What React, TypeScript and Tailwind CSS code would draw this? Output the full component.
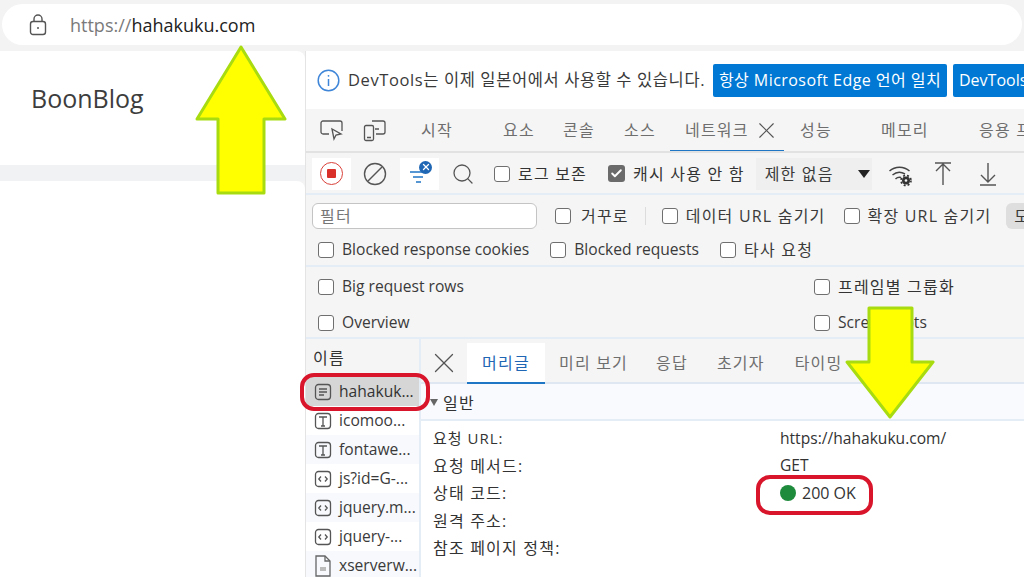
import React from "react";
import { X, Search, Check } from "lucide-react";

const K = "text-[16px] tracking-[1.2px]";

function Box({ checked = false }: { checked?: boolean }) {
  return checked ? (
    <span className="flex h-[17px] w-[17px] shrink-0 items-center justify-center rounded-[3px] bg-[#6b6b6b]">
      <Check size={13} strokeWidth={3.5} className="text-white" />
    </span>
  ) : (
    <span className="h-[16px] w-[16px] shrink-0 rounded-[3px] border border-[#6f6f6f] bg-white" />
  );
}

function CheckItem({ label, checked, className = "" }: { label: string; checked?: boolean; className?: string }) {
  return (
    <div className={`flex shrink-0 items-center gap-[8px] whitespace-nowrap ${className}`}>
      <Box checked={checked} />
      <span>{label}</span>
    </div>
  );
}

function FileIcon({ kind }: { kind: "doc" | "font" | "js" | "file" }) {
  if (kind === "file")
    return (
      <svg width="18" height="22" viewBox="0 0 18 22" fill="none" stroke="#666" strokeWidth="1.3" className="shrink-0">
        <path d="M2 1h9l5 5v15H2z" />
        <path d="M11 1v5h5" />
        <rect x="6" y="12" width="6" height="4" fill="#bbb" stroke="none" />
      </svg>
    );
  return (
    <svg width="18" height="18" viewBox="0 0 18 18" fill="none" stroke="#555" strokeWidth="1.3" className="shrink-0">
      <rect x="1.5" y="1.5" width="15" height="15" rx="3" />
      {kind === "doc" && <path d="M5 6h8M5 9h8M5 12h5" />}
      {kind === "font" && <path d="M5 5h8M9 5v9M7 14h4" />}
      {kind === "js" && <path d="M7 6.5 4.8 9 7 11.5M11 6.5 13.2 9 11 11.5" />}
    </svg>
  );
}

const files: [("doc" | "font" | "js" | "file"), string][] = [
  ["font", "icomoo..."],
  ["font", "fontawe..."],
  ["js", "js?id=G-..."],
  ["js", "jquery.m..."],
  ["js", "jquery-..."],
  ["file", "xserverw..."],
];

export default function App() {
  return (
    <div className="relative h-[577px] w-[1024px] overflow-hidden bg-[#f3f3f3] font-['Open_Sans','Noto_Sans_CJK_KR',sans-serif] text-[15.6px] leading-none text-[#3a3a3a]">
      {/* address bar */}
      <div className="flex h-[51px] items-start px-[2px] pt-[4px]">
        <div className="flex h-[41px] w-full items-center rounded-full bg-white pl-[27px] text-[18px]">
          <svg width="18" height="22" viewBox="0 0 18 22" fill="none" stroke="#555" strokeWidth="1.4">
            <rect x="1.5" y="7.5" width="15" height="13" rx="2.5" />
            <path d="M5 7.5V5a4 4 0 0 1 8 0v2.5" />
            <circle cx="9" cy="14" r="1" fill="#555" stroke="none" />
          </svg>
          <span className="ml-[23px] text-[#7a7a7a]">https://</span>
          <span className="text-[#222]">hahakuku.com</span>
        </div>
      </div>

      <div className="flex h-[526px]">
        {/* page */}
        <div className="flex w-[305px] shrink-0 flex-col">
          <div className="h-[114px] rounded-tr-lg bg-white pl-[31px] pt-[35px] text-[25px] text-[#3d3d3d]">BoonBlog</div>
          <div className="h-[16px] bg-[#f1f2f4]" />
          <div className="flex-1 rounded-tr-lg bg-white" />
        </div>

        {/* devtools */}
        <div className="flex min-w-0 flex-1 flex-col border-l border-[#e4e4e4] bg-white">
          {/* info bar */}
          <div className="flex h-[58px] shrink-0 items-center overflow-hidden whitespace-nowrap pl-[11px]">
            <svg width="23" height="23" viewBox="0 0 23 23" fill="none" stroke="#3f86d8" strokeWidth="1.5" className="shrink-0">
              <circle cx="11.5" cy="11.5" r="10.3" />
              <path d="M11.5 10v7" />
              <circle cx="11.5" cy="6.8" r="0.9" fill="#3f86d8" stroke="none" />
            </svg>
            <span className="ml-[8px] w-[365px] shrink-0 text-[16.5px] tracking-[0.6px]">DevTools는 이제 일본어에서 사용할 수 있습니다.</span>
            <span className="flex h-[33px] w-[234px] shrink-0 items-center justify-center rounded-[2px] bg-[#0078d4] text-[16px] tracking-[0.45px] text-white">항상 Microsoft Edge 언어 일치</span>
            <span className="ml-[6px] flex h-[33px] w-[80px] shrink-0 items-center rounded-l-[2px] bg-[#0078d4] pl-[6px] text-[16px] text-white">DevTools</span>
          </div>

          {/* tabs */}
          <div className={`flex h-[44px] shrink-0 items-center overflow-hidden whitespace-nowrap border-b-2 border-[#e2e2e2] bg-[#f5f5f5] pl-[14px] text-[#6e6e6e] ${K}`}>
            <svg width="24" height="22" viewBox="0 0 24 22" fill="none" stroke="#555" strokeWidth="1.3" className="shrink-0">
              <path d="M9 15H3a2 2 0 0 1-2-2V4a2 2 0 0 1 2-2h17a2 2 0 0 1 2 2v8" />
              <path d="M12 10l2 10 2-4 5-1z" />
            </svg>
            <svg width="24" height="24" viewBox="0 0 24 24" fill="none" stroke="#555" strokeWidth="1.3" className="ml-[19px] shrink-0">
              <path d="M9 3h11a2 2 0 0 1 2 2v9a2 2 0 0 1-2 2h-7" />
              <rect x="1.5" y="7.5" width="9" height="15" rx="1.5" />
              <path d="M4 19.5h4M12 11h4" />
            </svg>
            <span className="ml-[34px] w-[82px] shrink-0">시작</span>
            <span className="w-[60px] shrink-0">요소</span>
            <span className="w-[61px] shrink-0">콘솔</span>
            <span className="w-[61px] shrink-0">소스</span>
            <div className="relative flex h-full w-[115px] shrink-0 items-center">
              <span>네트워크</span>
              <X size={27} strokeWidth={1} className="ml-[4px] text-[#555]" />
              <span className="absolute -bottom-[1px] left-[-15px] right-[16px] h-[2px] bg-[#1f76c5]" />
            </div>
            <span className="w-[81px] shrink-0">성능</span>
            <span className="w-[98px] shrink-0">메모리</span>
            <span>응용 프</span>
          </div>

          {/* toolbar */}
          <div className={`flex h-[42px] shrink-0 items-center whitespace-nowrap border-b-2 border-[#e4ecf6] bg-[#f5f5f5] pl-[6px] pt-[1px] ${K}`}>
            <span className="flex h-[32px] w-[39px] shrink-0 items-center justify-center bg-white">
              <span className="flex h-[23px] w-[23px] items-center justify-center rounded-full border-[1.5px] border-[#d9413a]">
                <span className="h-[9px] w-[9px] rounded-[1px] bg-[#d9302a]" />
              </span>
            </span>
            <svg width="24" height="24" viewBox="0 0 24 24" fill="none" stroke="#555" strokeWidth="1.4" className="ml-[12px] shrink-0">
              <circle cx="12" cy="12" r="10.5" />
              <path d="M5 19 19 5" />
            </svg>
            <span className="relative ml-[13px] flex h-[32px] w-[39px] shrink-0 items-center justify-center bg-white">
              <svg width="24" height="24" viewBox="0 0 24 24" fill="none" stroke="#1f76c5" strokeWidth="1.4">
                <path d="M2 10h15M5 15h10M8 20h5" />
              </svg>
              <span className="absolute right-[7px] top-[3px] flex h-[13px] w-[13px] items-center justify-center rounded-full bg-[#1f66b5]">
                <X size={10} strokeWidth={3} className="text-white" />
              </span>
            </span>
            <Search size={24} strokeWidth={1.3} className="ml-[12px] shrink-0 text-[#555]" />
            <CheckItem label="로그 보존" className="ml-[19px] text-[#333]" />
            <CheckItem label="캐시 사용 안 함" checked className="ml-[21px] text-[#333]" />
            <div className="ml-[11px] flex h-[32px] w-[116px] shrink-0 items-center justify-between bg-[#efefef] pl-[9px] pr-[2px]">
              <span>제한 없음</span>
              <span className="h-0 w-0 border-x-[6px] border-t-[8px] border-x-transparent border-t-[#222]" />
            </div>
            <svg width="26" height="26" viewBox="0 0 26 26" fill="none" stroke="#444" strokeWidth="1.5" className="ml-[16px] shrink-0">
              <path d="M1.5 10a15 15 0 0 1 20 0M4.5 14a11 11 0 0 1 12.5-1M7.5 18a6 6 0 0 1 5.5-1.5" />
              <circle cx="18" cy="19.5" r="4" fill="#333" stroke="none" />
              <circle cx="18" cy="19.5" r="5" fill="none" stroke="#333" strokeWidth="1.6" strokeDasharray="2 2" />
              <circle cx="18" cy="19.5" r="1.3" fill="#f5f5f5" stroke="none" />
            </svg>
            <svg width="20" height="26" viewBox="0 0 20 26" fill="none" stroke="#555" strokeWidth="1.4" className="ml-[19px] shrink-0">
              <path d="M2 2h16M10 3v21M3 10l7-7 7 7" />
            </svg>
            <svg width="20" height="26" viewBox="0 0 20 26" fill="none" stroke="#555" strokeWidth="1.4" className="ml-[25px] shrink-0">
              <path d="M2 24h16M10 2v19M3 14l7 7 7-7" />
            </svg>
          </div>

          {/* filter row */}
          <div className={`flex h-[38px] shrink-0 items-center overflow-hidden whitespace-nowrap bg-[#f5f5f5] pl-[6px] pt-[3px] ${K}`}>
            <div className="flex h-[26px] w-[225px] shrink-0 items-center rounded-md border border-[#c4c4c4] bg-white pl-[7px] text-[#777]">필터</div>
            <CheckItem label="거꾸로" className="ml-[18px] gap-[10px]" />
            <span className="ml-[16px] h-[18px] w-px shrink-0 bg-[#dcdcdc]" />
            <CheckItem label="데이터 URL 숨기기" className="ml-[16px]" />
            <CheckItem label="확장 URL 숨기기" className="ml-[18px]" />
            <span className="ml-[15px] flex h-[26px] w-[60px] shrink-0 items-center rounded-md bg-[#dedede] pl-[8px]">모</span>
          </div>

          {/* filter row 2 */}
          <div className="flex h-[34px] shrink-0 items-center gap-[21px] whitespace-nowrap border-b-2 border-[#e4ecf6] bg-[#f5f5f5] pl-[12px] pt-[2px]">
            <CheckItem label="Blocked response cookies" />
            <CheckItem label="Blocked requests" />
            <CheckItem label="타사 요청" className={K} />
          </div>

          {/* settings */}
          <div className="grid h-[72px] shrink-0 grid-cols-[496px_1fr] content-center gap-y-[20px] whitespace-nowrap border-b-2 border-[#e4ecf6] bg-[#f5f5f5] pl-[12px] pt-[5px]">
            <CheckItem label="Big request rows" />
            <CheckItem label="프레임별 그룹화" className={`text-[#333] ${K}`} />
            <CheckItem label="Overview" />
            <CheckItem label="Screenshots" />
          </div>

          {/* split */}
          <div className="flex min-h-0 flex-1">
            <div className="w-[115px] shrink-0 border-r-2 border-[#e4ecf6] bg-white">
              <div className={`flex h-[38px] items-center bg-[#f5f5f5] pl-[7px] text-[#333] ${K}`}>이름</div>
              <div className="flex h-[29px] items-center gap-[7px] bg-[#d6d6d6] pl-[8px] text-[#333]">
                <FileIcon kind="doc" />
                <span>hahakuk...</span>
              </div>
              {files.map(([k, n], i) => (
                <div key={n} className={`flex h-[29px] items-center gap-[7px] overflow-hidden whitespace-nowrap pl-[8px] ${i % 2 === 0 ? "bg-white" : "bg-[#f7f9fc]"}`}>
                  <FileIcon kind={k} />
                  <span>{n}</span>
                </div>
              ))}
            </div>
            <div className="flex min-w-0 flex-1 flex-col">
              <div className={`flex h-[45px] shrink-0 items-end whitespace-nowrap border-b-2 border-[#dfe7f2] bg-[#f5f5f5] text-[#6e6e6e] ${K}`}>
                <X size={34} strokeWidth={0.9} className="mb-[2px] ml-[6px] text-[#555]" />
                <div className="relative ml-[6px] flex h-[39px] w-[78px] items-center justify-center bg-white text-[#1f66b5]">
                  머리글
                  <span className="absolute -bottom-[2px] left-0 right-0 h-[2px] bg-[#1f76c5]" />
                </div>
                <span className="ml-[14px] flex h-[39px] items-center">미리 보기</span>
                <span className="ml-[28px] flex h-[39px] items-center">응답</span>
                <span className="ml-[29px] flex h-[39px] items-center">초기자</span>
                <span className="ml-[30px] flex h-[39px] items-center">타이밍</span>
              </div>
              <div className={`flex h-[37px] shrink-0 items-center gap-[5px] border-b-2 border-[#e4ecf6] bg-[#f8fafd] pl-[9px] pt-[2px] text-[#333] ${K}`}>
                <span className="h-0 w-0 border-x-[4px] border-t-[7px] border-x-transparent border-t-[#666]" />
                <span>일반</span>
              </div>
              <div className="grid flex-1 grid-cols-[347px_1fr] auto-rows-[27.3px] items-center whitespace-nowrap bg-white pl-[12px] pt-[4px] text-[#333]">
                <span className="text-[15px] tracking-[1px]">요청 URL:</span>
                <span>https://hahakuku.com/</span>
                <span className={K}>요청 메서드:</span>
                <span>GET</span>
                <span className={K}>상태 코드:</span>
                <span className="flex items-center gap-[6px] text-[16px]">
                  <span className="h-[16px] w-[16px] rounded-full bg-[#1e8a3c]" />
                  200 OK
                </span>
                <span className={K}>원격 주소:</span>
                <span />
                <span className={K}>참조 페이지 정책:</span>
                <span />
              </div>
            </div>
          </div>
        </div>
      </div>

      {/* annotations */}
      <svg viewBox="0 0 94 152" className="absolute left-[194px] top-[44px] h-[152px] w-[94px]">
        <path d="M47 3 91 75H70V149H24V75H3Z" fill="#ffff00" stroke="#a8dc10" strokeWidth="3" strokeLinejoin="round" />
      </svg>
      <svg viewBox="0 0 90 114" className="absolute left-[845px] top-[306px] h-[114px] w-[90px]">
        <path d="M45 111 88 56H67V2H24V56H2Z" fill="#ffff00" stroke="#a8dc10" strokeWidth="3" strokeLinejoin="round" />
      </svg>
      <span className="absolute left-[300px] top-[373px] h-[38px] w-[130px] rounded-[14px] border-[4.5px] border-[#d8152b]" />
      <span className="absolute left-[756px] top-[475px] h-[40px] w-[117px] rounded-[14px] border-[4.5px] border-[#d8152b]" />
    </div>
  );
}
